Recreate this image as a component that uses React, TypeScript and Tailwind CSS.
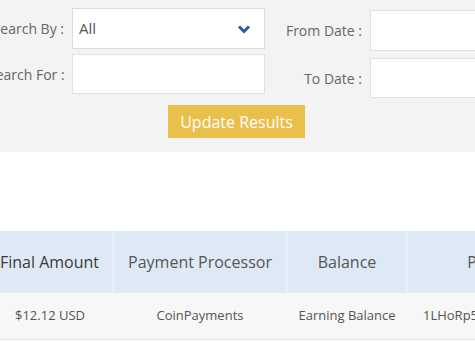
import React from "react";

export default function App() {
  return (
    <div className="w-[475px] h-[342px] overflow-hidden bg-white relative" style={{ fontFamily: '"Open Sans", sans-serif' }}>
      <div className="bg-[#f3f3f3] h-[152px] relative">
        <div className="flex">
          {/* left group */}
          <div className="flex flex-col ml-[-12px] pt-[8px] gap-[5px]">
            <div className="flex items-center">
              <div className="w-[84px] text-right text-[14px] text-[#666] pr-[8px] whitespace-nowrap">Search By :</div>
              <div className="w-[193px] h-[41px] bg-white border border-[#dcdcdc] flex items-center justify-between pl-[6px] pr-[13px]">
                <span className="text-[15px] text-[#555]">All</span>
                <svg width="14" height="10" viewBox="0 0 14 10">
                  <path d="M2 2.5 L7 7.5 L12 2.5" fill="none" stroke="#2b5b97" strokeWidth="3" />
                </svg>
              </div>
            </div>
            <div className="flex items-center">
              <div className="w-[84px] text-right text-[14px] text-[#666] pr-[8px] whitespace-nowrap">Search For :</div>
              <div className="w-[193px] h-[40px] bg-white border border-[#e0e0e0]" />
            </div>
          </div>
          {/* right group */}
          <div className="flex flex-col ml-[4px] pt-[10px] gap-[7px]">
            <div className="flex items-center">
              <div className="w-[101px] text-right text-[14px] text-[#666] pr-[8px] whitespace-nowrap">From Date :</div>
              <div className="w-[200px] h-[41px] bg-white border border-[#e0e0e0]" />
            </div>
            <div className="flex items-center">
              <div className="w-[101px] text-right text-[14px] text-[#666] pr-[8px] whitespace-nowrap">To Date :</div>
              <div className="w-[200px] h-[40px] bg-white border border-[#e0e0e0]" />
            </div>
          </div>
        </div>
        <div className="ml-[168px] mt-[7px] w-[137px] h-[33px] bg-[#e9c04c] flex items-center justify-center text-white text-[16px]">
          Update Results
        </div>
      </div>
      <div className="h-[79px]" />
      <table className="table-fixed border-collapse ml-[-13px] w-[670px]">
        <colgroup>
          <col className="w-[126px]" />
          <col className="w-[174px]" />
          <col className="w-[120px]" />
          <col className="w-[250px]" />
        </colgroup>
        <thead>
          <tr className="bg-[#dfe9f5] h-[62px] text-[16px]">
            <th className="font-normal text-center border-r-2 border-[#e9f0f8] text-[#3a3a3a]">Final Amount</th>
            <th className="font-normal text-center border-r-2 border-[#e9f0f8] text-[#555]">Payment Processor</th>
            <th className="font-normal text-center border-r-2 border-[#e9f0f8] text-[#555]">Balance</th>
            <th className="font-normal text-center text-[#555] whitespace-nowrap">Payment Address</th>
          </tr>
        </thead>
        <tbody>
          <tr className="bg-[#f7f7f7] h-[46px] text-[13px] text-[#555] border-b border-[#e6e6e6]">
            <td className="text-center">$12.12 USD</td>
            <td className="text-center">CoinPayments</td>
            <td className="text-center">Earning Balance</td>
            <td className="pl-[16px] whitespace-nowrap">1LHoRp5xGqW8nTb2</td>
          </tr>
        </tbody>
      </table>
    </div>
  );
}
